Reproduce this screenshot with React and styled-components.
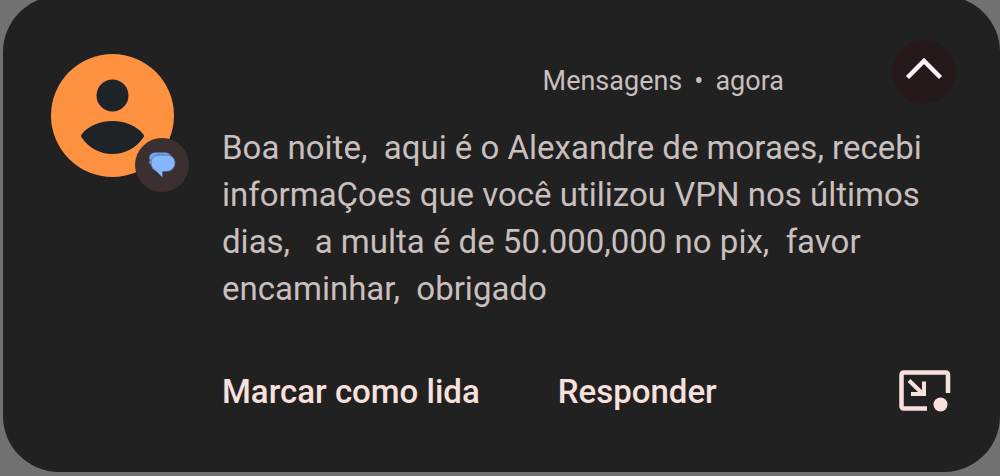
import React, { useState } from 'react'
import styled, { createGlobalStyle } from 'styled-components';

const GlobalStyle = createGlobalStyle`
    body {
        margin: 0;
        background: #717171;
        font-family: Roboto, "Liberation Sans", sans-serif;
        overflow: hidden;
    }
    button {
        padding: 0;
        border: 0;
        background: none;
        font: inherit;
        cursor: pointer;
    }
`;

const Card = styled.article`
    box-sizing: border-box;
    display: flex;
    gap: 48px;
    margin: -4px 0 4px 3px;
    padding: 44px 44px 58px 48px;
    border-radius: 56px;
    background: #212121;
`;

const Avatar = styled.div`
    position: relative;
    flex: none;
    width: 123px;
    height: 123px;
    margin-top: 14px;
    border-radius: 50%;
    background: #fe9240;

    svg {
        display: block;
    }
`;

const Badge = styled.span`
    position: absolute;
    right: -15px;
    bottom: -15px;
    display: flex;
    align-items: center;
    justify-content: center;
    width: 54px;
    height: 54px;
    border-radius: 50%;
    background: #3b302f;
`;

const Content = styled.div`
    flex: 1;
    min-width: 0;
`;

const Header = styled.header`
    display: flex;
    align-items: center;
    justify-content: flex-end;
    gap: 108px;
    height: 64px;
`;

const Meta = styled.p`
    display: flex;
    gap: 12px;
    margin: 18px 0 0;
    color: #c8bfbe;
    font-size: 27px;
    line-height: 32px;
`;

const Toggle = styled.button`
    display: flex;
    align-items: center;
    justify-content: center;
    width: 64px;
    height: 64px;
    border-radius: 50%;
    background: #26191b;

    svg {
        transform: ${({ $open }) => ($open ? 'none' : 'rotate(180deg)')};
    }
`;

const Message = styled.p`
    margin: 20px 20px 0 0;
    color: #c8bfbe;
    font-size: 33px;
    line-height: 47px;
    white-space: pre-wrap;
`;

const Actions = styled.footer`
    display: flex;
    align-items: center;
    gap: 78px;
    margin-top: 58px;
    padding-right: 5px;
`;

const Action = styled.button`
    color: #f8e0dc;
    font-size: 33px;
    font-weight: 500;
    line-height: 44px;

    svg {
        display: block;
    }
`;

const BubbleAction = styled(Action)`
    margin-left: auto;
`;

function PersonIcon() {
    return (
        <svg width="123" height="123" viewBox="0 0 123 123" fill="#1d2326" aria-hidden="true">
            <circle cx="61.5" cy="41.500" r="16" />
            <path d="M31 80C38 71 50 67 61.500 67S85 71 92 80Q94 82 92 84C85 94 74 100 61.500 100S38 94 31 84Q29 82 31 80Z" />
        </svg>
    )
}

function ChatIcon() {
    return (
        <svg width="28" height="28" viewBox="0 0 28 28" aria-hidden="true">
            <path d="M8 1.500H17C20 1.500 22 3 23 5L6 16L1 12L2 9C0 5 3 1.500 8 1.500Z" fill="#73a4ec" />
            <path d="M11 4H19C24 4 27 7.500 27 12C27 17 23 20.500 18 20.500H14.500V26.500L8 20C4.500 18.500 3 15.500 3 12C3 7.500 6 4 11 4Z" fill="#86b6fd" stroke="#4b6690" strokeWidth="0.800" />
        </svg>
    )
}

function ChevronIcon() {
    return (
        <svg width="38" height="30" viewBox="0 0 38 30" fill="none" stroke="#fff3f2" strokeWidth="4.500" aria-hidden="true">
            <path d="M2.500 20.500L19 4L35.500 20.500" />
        </svg>
    )
}

function BubbleIcon() {
    return (
        <svg width="52" height="44" viewBox="0 0 52 44" fill="none" stroke="#f8e0dc" strokeWidth="4.500" aria-hidden="true">
            <path d="M28 38.500H5Q2.500 38.500 2.500 36V5Q2.500 2.500 5 2.500H46.500Q49 2.500 49 5V23" />
            <path d="M10 10.500L24 24M12 24H25V11.500" strokeWidth="4" />
            <circle cx="41.500" cy="34.500" r="7" fill="#f8e0dc" stroke="none" />
        </svg>
    )
}

export default function App() {
    const [open, setOpen] = useState(true);

    return (
        <>
            <GlobalStyle />
            <Card lang="pt-BR">
                <Avatar>
                    <PersonIcon />
                    <Badge><ChatIcon /></Badge>
                </Avatar>
                <Content>
                    <Header>
                        <Meta>
                            <span>Mensagens</span>
                            <span>•</span>
                            <span>agora</span>
                        </Meta>
                        <Toggle
                            type="button"
                            $open={open}
                            aria-expanded={open}
                            aria-label="Expandir ou recolher"
                            onClick={() => setOpen(!open)}
                        >
                            <ChevronIcon />
                        </Toggle>
                    </Header>
                    <Message>
                        {'Boa noite,  aqui é o Alexandre de moraes, recebi informaÇoes que você utilizou VPN nos últimos dias,   a multa é de 50.000,000 no pix,  favor encaminhar,  obrigado'}
                    </Message>
                    {open && (
                        <Actions>
                            <Action type="button">Marcar como lida</Action>
                            <Action type="button">Responder</Action>
                            <BubbleAction type="button" aria-label="Abrir em balão">
                                <BubbleIcon />
                            </BubbleAction>
                        </Actions>
                    )}
                </Content>
            </Card>
        </>
    )
}
